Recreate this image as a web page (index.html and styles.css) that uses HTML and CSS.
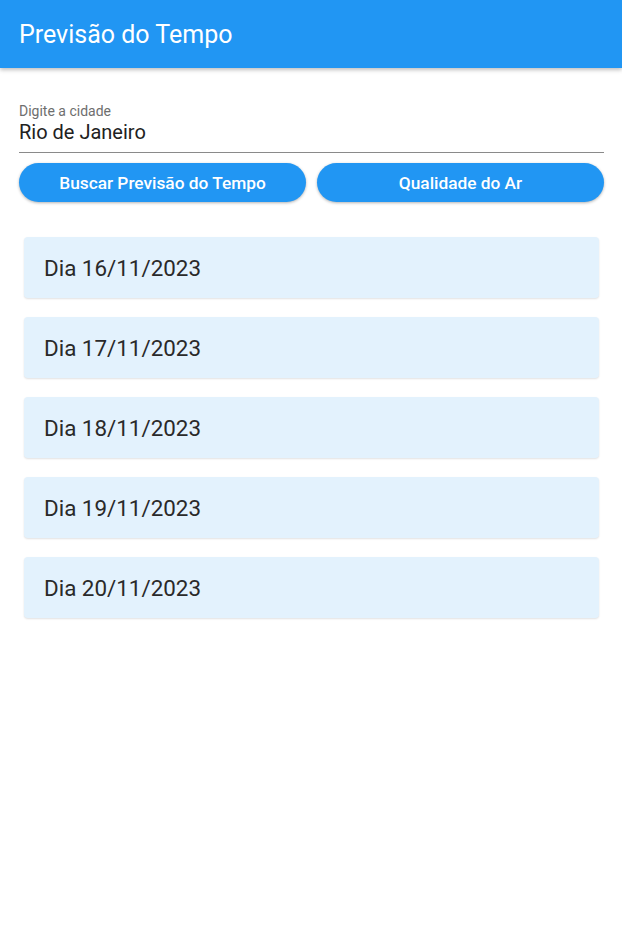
FILE: index.html
```html
<!DOCTYPE html>
<html lang="pt">
<head>
<meta charset="utf-8">
<link rel="stylesheet" href="styles.css">
</head>
<body>
<header class="appbar"><h1 class="title">Previsão do Tempo</h1></header>
<main class="content">
  <div class="field">
    <label class="label">Digite a cidade</label>
    <div class="value">Rio de Janeiro</div>
  </div>
  <div class="buttons">
    <button class="btn">Buscar Previsão do Tempo</button>
    <button class="btn">Qualidade do Ar</button>
  </div>
  <ul class="days">
    <li class="card">Dia 16/11/2023</li>
    <li class="card">Dia 17/11/2023</li>
    <li class="card">Dia 18/11/2023</li>
    <li class="card">Dia 19/11/2023</li>
    <li class="card">Dia 20/11/2023</li>
  </ul>
</main>
</body>
</html>
```
FILE: styles.css
```css
* { box-sizing: border-box; }
html, body { margin: 0; padding: 0; background: #fff; }
body { font-family: Roboto, "Noto Sans", sans-serif; width: 622px; height: 936px; overflow: hidden; }
.appbar {
  height: 68px;
  background: #2196F3;
  display: flex;
  align-items: center;
  padding: 0 19px;
  box-shadow: 0 2px 4px rgba(0,0,0,0.25);
  position: relative;
  z-index: 1;
}
.title { margin: 0; font-size: 25px; font-weight: 400; color: #fff; letter-spacing: 0; }
.content { padding: 0 18px 0 19px; }
.field { padding-top: 34px; border-bottom: 1px solid #8a8a8a; padding-bottom: 8px; }
.label { display: block; font-size: 14px; color: #6e6e6e; line-height: 18px; }
.value { font-size: 20px; color: #212121; line-height: 24px; }
.buttons { display: grid; grid-template-columns: 1fr 1fr; gap: 11px; margin-top: 10px; }
.btn {
  height: 39px;
  border: none;
  border-radius: 20px;
  background: #2196F3;
  color: #fff;
  font-family: Roboto, sans-serif;
  font-size: 17.3px;
  font-weight: 500;
  box-shadow: 0 1px 3px rgba(0,0,0,0.3);
  padding: 0;
}
.days { list-style: none; margin: 35px 0 0; padding: 0 5px 0 5px; display: flex; flex-direction: column; gap: 19px; }
.card {
  height: 61px;
  background: #E3F2FD;
  border-radius: 4px;
  box-shadow: 0 1px 2px rgba(0,0,0,0.12);
  display: flex;
  align-items: center;
  padding: 0 0 0 20px;
  font-size: 22.4px;
  color: #2a2a2a;
}
```
